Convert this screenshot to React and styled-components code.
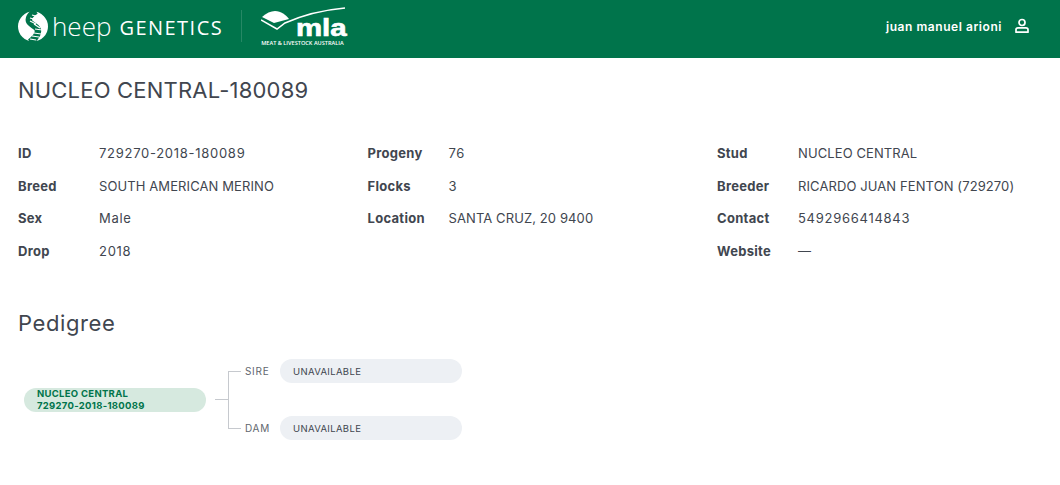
import styled, { createGlobalStyle } from "styled-components";

const green = "#00744b";
const ink = "#41464f";

const details = [
  [
    ["ID", "729270-2018-180089"],
    ["Breed", "SOUTH AMERICAN MERINO"],
    ["Sex", "Male"],
    ["Drop", "2018"],
  ],
  [
    ["Progeny", "76"],
    ["Flocks", "3"],
    ["Location", "SANTA CRUZ, 20 9400"],
  ],
  [
    ["Stud", "NUCLEO CENTRAL"],
    ["Breeder", "RICARDO JUAN FENTON (729270)"],
    ["Contact", "5492966414843"],
    ["Website", "—"],
  ],
];

const isCaps = (value) => /[A-Z]{2}/.test(value);

export default function App() {
  return (
    <>
      <GlobalStyle />
      <Header>
        <Logos>
          <SheepLogo>
            <HelixMark />
            <SheepWord>heep</SheepWord>
            <GeneticsWord>GENETICS</GeneticsWord>
          </SheepLogo>
          <LogoDivider />
          <MlaLogo>
            <MlaMark />
            <MlaWord>mla</MlaWord>
            <MlaCaption>MEAT &amp; LIVESTOCK AUSTRALIA</MlaCaption>
          </MlaLogo>
        </Logos>
        <UserMenu>
          <UserName>juan manuel arioni</UserName>
          <UserIcon />
        </UserMenu>
      </Header>
      <Main>
        <Title>NUCLEO CENTRAL-180089</Title>
        <DetailGrid>
          {details.map((column) => (
            <DetailColumn key={column[0][0]}>
              {column.map(([label, value]) => (
                <DetailRow key={label}>
                  <DetailLabel>{label}</DetailLabel>
                  <DetailValue $caps={isCaps(value)}>{value}</DetailValue>
                </DetailRow>
              ))}
            </DetailColumn>
          ))}
        </DetailGrid>
        <SectionTitle>Pedigree</SectionTitle>
        <Tree>
          <RootNode>
            <span>NUCLEO CENTRAL</span>
            <span>729270-2018-180089</span>
          </RootNode>
          <Stub />
          <Bracket />
          <Parents>
            <ParentRow>
              <ParentLabel>SIRE</ParentLabel>
              <ParentNode>UNAVAILABLE</ParentNode>
            </ParentRow>
            <ParentRow>
              <ParentLabel>DAM</ParentLabel>
              <ParentNode>UNAVAILABLE</ParentNode>
            </ParentRow>
          </Parents>
        </Tree>
      </Main>
    </>
  );
}

function HelixMark() {
  return (
    <svg width="30" height="31" viewBox="0 0 30 31">
      <circle cx="15" cy="15.5" r="15" fill="#fff" />
      <path
        d="M18 0 C13 3 10 6 11 10 C12 14 20 15 20 20 C20 25 16 28 12 31"
        fill="none"
        stroke={green}
        strokeWidth="6.5"
      />
      <path
        d="M14 4 L21 6 M12 7 L19 9 M12 10 L18 13 M16 13 L22 17 M17 18 L24 19 M16 22 L23 23 M14 25 L21 26 M12 28 L18 29"
        fill="none"
        stroke="#fff"
        strokeWidth="1.2"
      />
    </svg>
  );
}

function MlaMark() {
  return (
    <MarkSvg width="85" height="26" viewBox="0 0 85 26">
      <path d="M1 11 C5 7 10 5 14 5 C20 5 25 9 28 13 L13 17 Z" fill="#fff" />
      <path
        d="M0 14 L16 23 L24 17 C42 9 62 4 84 2"
        fill="none"
        stroke="#fff"
        strokeWidth="1.5"
      />
    </MarkSvg>
  );
}

function UserIcon() {
  return (
    <svg width="16" height="16" viewBox="0 0 16 16" fill="none" stroke="#fff" strokeWidth="1.7">
      <circle cx="8" cy="4.5" r="3" />
      <path d="M2 11.5 C2 10.5 3 9.8 4 9.8 H12 C13 9.8 14 10.5 14 11.5 V14.2 H2 Z" strokeLinejoin="round" />
    </svg>
  );
}

const GlobalStyle = createGlobalStyle`
  body {
    margin: 0;
    background: #ffffff;
    color: ${ink};
    font-family: "Inter", "Liberation Sans", sans-serif;
  }
`;

const Header = styled.header`
  height: 58px;
  background-color: ${green};
  display: flex;
  justify-content: space-between;
  align-items: center;
  padding: 0 30px 0 18px;
  box-sizing: border-box;
`;

const Logos = styled.div`
  display: flex;
  align-items: center;
`;

const SheepLogo = styled.div`
  display: flex;
  align-items: center;
  color: #ffffff;
  font-family: "Open Sans", sans-serif;
  margin-top: -6px;
`;

const SheepWord = styled.span`
  font-size: 26px;
  font-weight: 300;
  margin-left: 4px;
  line-height: 31px;
`;

const GeneticsWord = styled.span`
  font-size: 20px;
  font-weight: 400;
  letter-spacing: 1.47px;
  margin-left: 8px;
  line-height: 31px;
  padding-top: 3px;
`;

const LogoDivider = styled.div`
  width: 1px;
  height: 32px;
  background-color: rgba(255, 255, 255, 0.15);
  margin: -6px 19px 0 18px;
`;

const MlaLogo = styled.div`
  position: relative;
  width: 85px;
  height: 46px;
  color: #ffffff;
`;

const MarkSvg = styled.svg`
  position: absolute;
  top: 0;
  left: 0;
`;

const MlaWord = styled.span`
  position: absolute;
  right: 0;
  top: 12px;
  font-family: "Liberation Sans", sans-serif;
  font-size: 23px;
  font-weight: 700;
  line-height: 20px;
  transform: scaleX(1.28);
  transform-origin: right center;
  -webkit-text-stroke: 0.6px #ffffff;
`;

const MlaCaption = styled.span`
  position: absolute;
  left: 0;
  top: 34px;
  font-family: "Open Sans", sans-serif;
  font-size: 5.6px;
  font-weight: 600;
  line-height: 7px;
  white-space: nowrap;
`;

const UserMenu = styled.div`
  display: flex;
  align-items: center;
  gap: 12px;
  color: #ffffff;
  margin-top: -6px;
`;

const UserName = styled.span`
  font-size: 12px;
  font-weight: 600;
  letter-spacing: 0.55px;
`;

const Main = styled.main`
  padding: 0 18px;
`;

const Title = styled.h1`
  margin: 0;
  padding-top: 18px;
  font-size: 22px;
  font-weight: 400;
  line-height: 29px;
  letter-spacing: 0.2px;
`;

const DetailGrid = styled.div`
  display: grid;
  grid-template-columns: 349.5px 349.5px 1fr;
  margin-top: 32px;
`;

const DetailColumn = styled.div`
  display: flex;
  flex-direction: column;
`;

const DetailRow = styled.div`
  display: flex;
  align-items: center;
  height: 32.5px;
  font-size: 13px;
`;

const DetailLabel = styled.span`
  width: 81px;
  font-weight: 700;
  letter-spacing: 0.3px;
`;

const DetailValue = styled.span`
  letter-spacing: ${(props) => (props.$caps ? "0.1px" : "0.72px")};
`;

const SectionTitle = styled.h2`
  margin: 43px 0 0;
  font-size: 22px;
  font-weight: 400;
  line-height: 27px;
  letter-spacing: 0.6px;
`;

const Tree = styled.div`
  display: flex;
  align-items: center;
  margin-top: 22px;
  padding-left: 6px;
`;

const RootNode = styled.div`
  width: 182px;
  height: 24px;
  box-sizing: border-box;
  padding-left: 13px;
  border-radius: 12px;
  background-color: #d6e9df;
  color: ${green};
  display: flex;
  flex-direction: column;
  justify-content: center;
  font-size: 9.5px;
  font-weight: 700;
  line-height: 12px;
  letter-spacing: 0.3px;
`;

const Stub = styled.div`
  width: 13px;
  height: 1px;
  margin-left: 9px;
  background-color: #c6c9ce;
`;

const Bracket = styled.div`
  width: 12px;
  height: 56px;
  border: 1px solid #c6c9ce;
  border-right: 0;
`;

const Parents = styled.div`
  display: flex;
  flex-direction: column;
  gap: 33px;
  margin-left: 4px;
`;

const ParentRow = styled.div`
  display: flex;
  align-items: center;
`;

const ParentLabel = styled.span`
  width: 35px;
  font-size: 10px;
  letter-spacing: 0.7px;
  color: #61666e;
`;

const ParentNode = styled.div`
  width: 182px;
  height: 24px;
  box-sizing: border-box;
  padding-left: 13px;
  border-radius: 12px;
  background-color: #edf0f4;
  display: flex;
  align-items: center;
  font-size: 9.5px;
  letter-spacing: 0.35px;
`;
